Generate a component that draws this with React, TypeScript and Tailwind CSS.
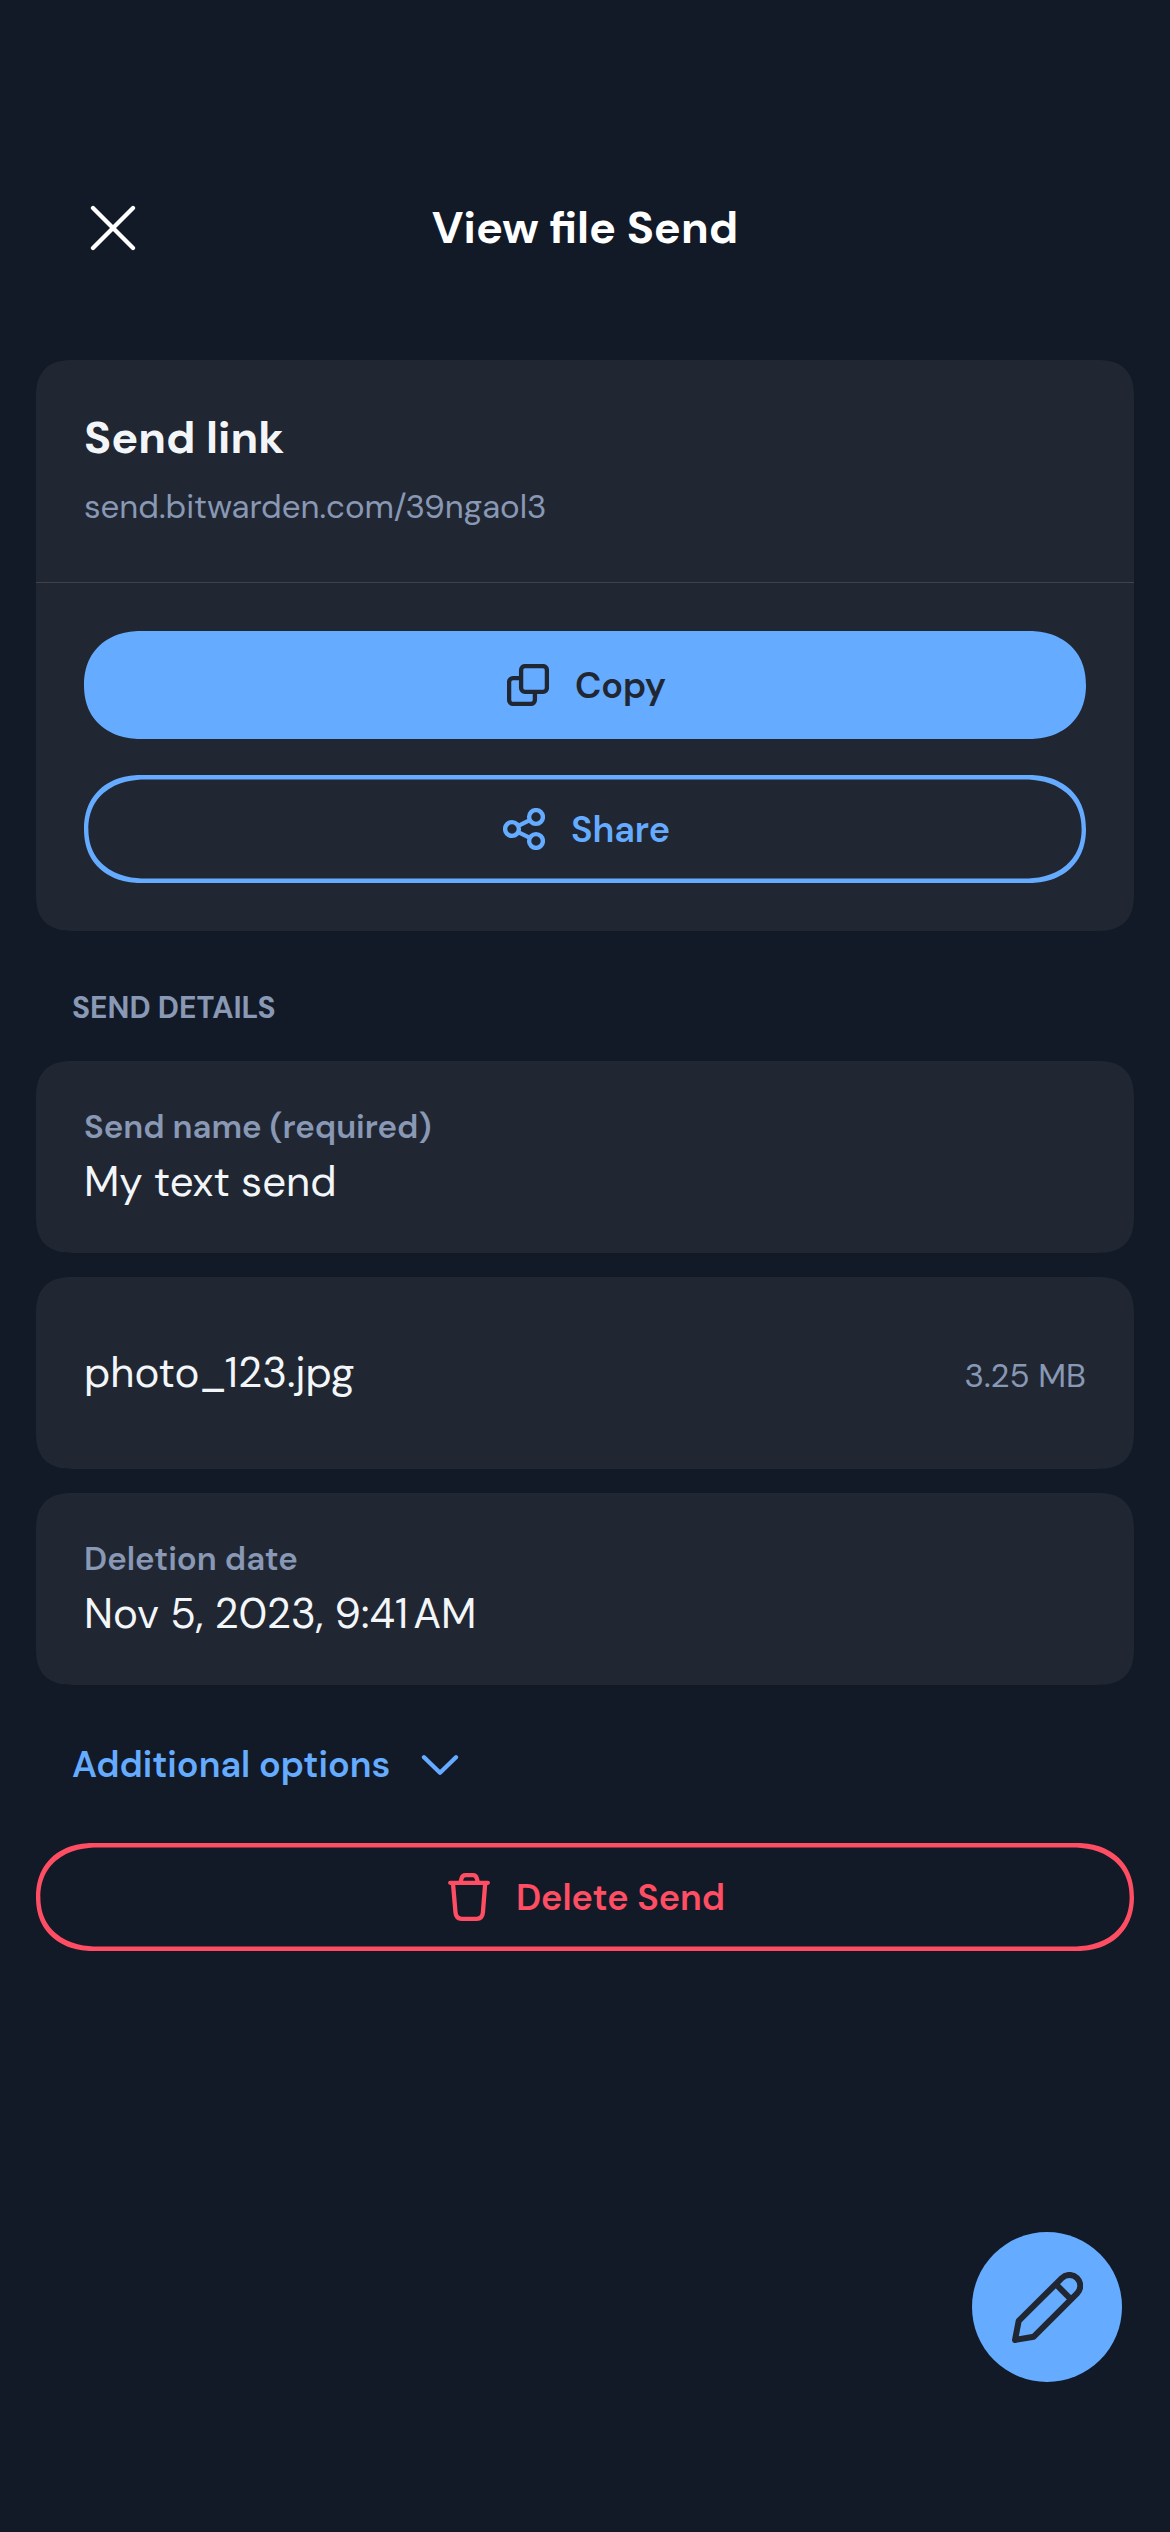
import React from "react";

const cardShape = "bg-[#202733] rounded-[38px] [corner-shape:superellipse(1.38)]";
const pillShape =
  "flex h-[108px] w-full items-center justify-center gap-[26px] pl-[3px] text-[36px] font-semibold [border-radius:58px/54px] [corner-shape:superellipse(1.15)]";

function CloseIcon() {
  return (
    <svg width="46" height="46" viewBox="0 0 46 46" fill="none" stroke="currentColor" strokeWidth="4.3" strokeLinecap="round">
      <path d="M3 3 43 43M43 3 3 43" />
    </svg>
  );
}

function CopyIcon() {
  return (
    <svg width="42" height="42" viewBox="0 0 42 42" fill="none" stroke="currentColor" strokeWidth="4.3">
      <rect x="14.1" y="2.1" width="25.8" height="25.8" rx="3.9" />
      <path d="M14 14.1H6a3.9 3.9 0 0 0-3.9 3.9v18A3.9 3.9 0 0 0 6 39.9h18a3.9 3.9 0 0 0 3.9-3.9v-8" />
    </svg>
  );
}

function ShareIcon() {
  return (
    <svg width="42" height="42" viewBox="0 0 42 42" fill="none" stroke="currentColor" strokeWidth="4.4">
      <circle cx="9" cy="21" r="6.9" />
      <circle cx="33" cy="9" r="6.9" />
      <circle cx="33" cy="33" r="6.9" />
      <path d="M15.2 17.9 26.8 12.1M15.2 24.1l11.6 5.8" />
    </svg>
  );
}

function ChevronIcon() {
  return (
    <svg width="38" height="22" viewBox="0 0 38 22" fill="none" stroke="currentColor" strokeWidth="4.3" strokeLinecap="round" strokeLinejoin="round">
      <path d="M3 3.2 19 18.8 35 3.2" />
    </svg>
  );
}

function TrashIcon() {
  return (
    <svg width="42" height="48" viewBox="0 0 42 48" fill="none" stroke="currentColor" strokeWidth="4.3" strokeLinecap="round" strokeLinejoin="round">
      <path d="M2.2 9.8h37.6" />
      <path d="M12.6 9.2l.9-3.6c.6-2.2 1.8-3.4 4-3.4h7.4c2.2 0 3.4 1.2 4 3.4l.9 3.6" />
      <path d="M5 10.5l2.5 29c.4 4 2.4 6.3 6.2 6.3h15c3.8 0 5.8-2.3 6.2-6.3l2.3-29" />
    </svg>
  );
}

function PencilIcon() {
  return (
    <svg width="71" height="71" viewBox="0 0 71 71" fill="none" stroke="currentColor" strokeWidth="6" strokeLinecap="round" strokeLinejoin="round">
      <path d="M49.8 6.1A10.8 10.8 0 0 1 65.1 21.4L21.8 64.7 3 68 6.7 48.9Z" />
      <path d="M43.8 12.1 59 27.3" strokeLinecap="butt" />
    </svg>
  );
}

function Field({ label, children }: { label: string; children: React.ReactNode }) {
  return (
    <div className={`${cardShape} flex h-[192px] flex-col gap-[10px] px-12 pt-[46px]`}>
      <div className="text-[33px] leading-[40px] font-semibold text-[#8898B5]">{label}</div>
      <div className="text-[42px] leading-[50px]">{children}</div>
    </div>
  );
}

export default function App() {
  return (
    <div className="relative min-h-[2532px] w-[1170px] bg-[#121A27] pt-[170px] font-['DM_Sans',Inter,sans-serif] whitespace-nowrap text-[#F3F6F9]">
      <header className="grid h-[116px] grid-cols-[1fr_auto_1fr] items-center px-[90px] text-white">
        <button className="w-fit" aria-label="Close">
          <CloseIcon />
        </button>
        <h1 className="text-[45px] leading-[54px] font-bold">View file Send</h1>
      </header>

      <main className="px-9 pt-[74px]">
        <section className={cardShape}>
          <div className="flex h-[223px] flex-col gap-[23px] border-b border-[#3F434B] px-12 pt-[52px]">
            <h2 className="text-[45px] leading-[52px] font-bold">Send link</h2>
            <p className="text-[33px] leading-[40px] text-[#8898B5]">send.bitwarden.com/39ngaol3</p>
          </div>
          <div className="flex flex-col gap-9 p-12">
            <button className={`${pillShape} bg-[#65ABFF] text-[#202733]`}>
              <CopyIcon />
              <span className="pt-px">Copy</span>
            </button>
            <button className={`${pillShape} text-[#65ABFF] shadow-[inset_0_0_0_4.4px_#65ABFF]`}>
              <ShareIcon />
              <span className="pt-px">Share</span>
            </button>
          </div>
        </section>

        <h3 className="mt-[59px] mb-[35px] pl-9 text-[30px] leading-[36px] font-bold text-[#8898B5]">SEND DETAILS</h3>

        <section className="flex flex-col gap-6">
          <Field label="Send name (required)">My text send</Field>
          <div className={`${cardShape} flex h-[192px] items-center px-12`}>
            <div className="flex w-full items-baseline justify-between">
              <span className="text-[42px] leading-[50px]">photo_123.jpg</span>
              <span className="text-[33px] leading-[40px] text-[#8898B5]">3.25 MB</span>
            </div>
          </div>
          <Field label="Deletion date">
            Nov 5, 2023, 9:41<span className="[word-spacing:-6px]"> AM</span>
          </Field>
        </section>

        <button className="mt-[58px] mb-[56px] ml-9 flex h-[44px] items-center gap-[31px] text-[36px] leading-[44px] font-semibold text-[#65ABFF]">
          Additional options
          <ChevronIcon />
        </button>

        <button className={`${pillShape} text-[#FF4E63] shadow-[inset_0_0_0_4.4px_#FF4E63]`}>
          <TrashIcon />
          <span className="pt-px">Delete Send</span>
        </button>
      </main>

      <button
        aria-label="Edit"
        className="absolute top-[2232px] right-12 flex size-[150px] items-center justify-center rounded-full bg-[#65ABFF] text-[#202733]"
      >
        <PencilIcon />
      </button>
    </div>
  );
}
